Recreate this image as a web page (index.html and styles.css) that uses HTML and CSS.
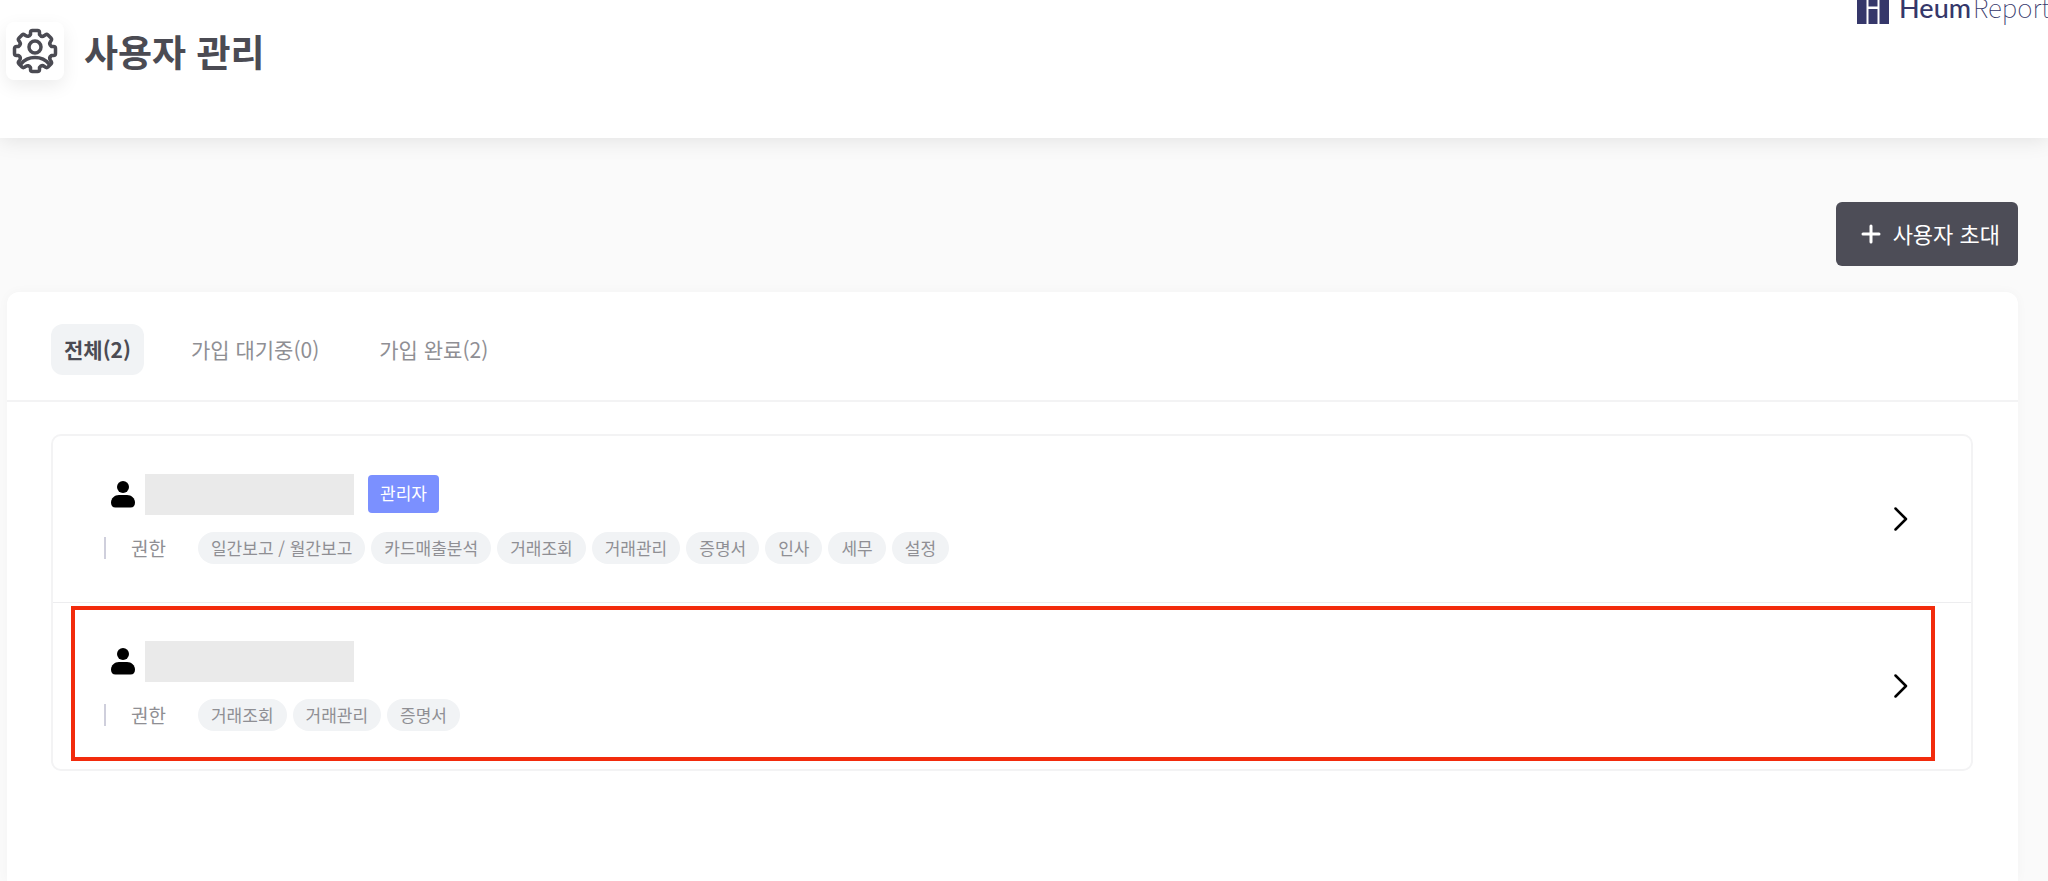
FILE: index.html
```html
<!DOCTYPE html>
<html lang="ko">
<head>
    <meta charset="UTF-8">
    <meta name="viewport" content="width=device-width, initial-scale=1.0">
    <title>사용자 관리 - Heum Report</title>
    <link rel="stylesheet" href="styles.css">
</head>
<body>
    <header class="header">
        <div class="page-title">
            <span class="title-icon">
                <svg width="46" height="46" viewBox="0 0 46 46" fill="none" stroke="currentColor" stroke-width="3.500" stroke-linejoin="round" stroke-linecap="round">
                    <path d="M18.500 6.500V4.500A2 2 0 0 1 20.500 2.500H25.500A2 2 0 0 1 27.500 4.500V6.500Q29.500 9.500 32.500 7.500Q34.500 5.500 36 7L39 10Q40.500 11.500 38.500 13.500Q36.500 16.500 39.500 18.500H41.500A2 2 0 0 1 43.500 20.500V25.500A2 2 0 0 1 41.500 27.500H39.500Q36.500 29.500 38.500 32.500Q40.500 34.500 39 36L36 39Q34.500 40.500 32.500 38.500Q29.500 36.500 27.500 39.500V41.500A2 2 0 0 1 25.500 43.500H20.500A2 2 0 0 1 18.500 41.500V39.500Q16.500 36.500 13.500 38.500Q11.500 40.500 10 39L7 36Q5.500 34.500 7.500 32.500Q9.500 29.500 6.500 27.500H4.500A2 2 0 0 1 2.500 25.500V20.500A2 2 0 0 1 4.500 18.500H6.500Q9.500 16.500 7.500 13.500Q5.500 11.500 7 10L10 7Q11.500 5.500 13.500 7.500Q16.500 9.500 18.500 6.500Z"/>
                    <circle cx="23" cy="19" r="6"/>
                    <path d="M9 36Q14 29.500 23 29.500T37 36"/>
                </svg>
            </span>
            <h1>사용자 관리</h1>
        </div>
        <a class="logo" href="#" aria-label="Heum Report">
            <svg width="32" height="33" viewBox="0 0 32 33" fill="currentColor">
                <path d="M0 0h9.500v33H0zM11.500 0h9v15.500h-9zM11.500 18h9v15h-9zM22.500 0h9.500v33h-9.500z"/>
            </svg>
            <span class="logo-text"><span class="logo-name">Heum</span><span class="logo-sub">Report</span></span>
        </a>
    </header>

    <main class="main">
        <div class="actions">
            <button type="button" class="invite-btn">
                <svg width="20" height="20" viewBox="0 0 20 20" fill="none" stroke="currentColor" stroke-width="3" stroke-linecap="round">
                    <path d="M10 2v16M2 10h16"/>
                </svg>
                <span>사용자 초대</span>
            </button>
        </div>

        <section class="panel">
            <nav class="tabs">
                <button type="button" class="tab active">전체(2)</button>
                <button type="button" class="tab">가입 대기중(0)</button>
                <button type="button" class="tab">가입 완료(2)</button>
            </nav>

            <ul class="user-list">
                <li class="user">
                    <div class="user-info">
                        <div class="user-head">
                            <svg class="user-icon" width="24" height="27" viewBox="0 0 24 27" fill="currentColor">
                                <circle cx="12" cy="6" r="6"/>
                                <path d="M8 14h8c4.500 0 8 3.500 8 7.500 0 3-1.500 5-4.500 5h-15C1.500 26.500 0 24.500 0 21.500 0 17.500 3.500 14 8 14z"/>
                            </svg>
                            <span class="user-name"></span>
                            <span class="badge">관리자</span>
                        </div>
                        <div class="perms">
                            <span class="perms-label">권한</span>
                            <span class="tag">일간보고 / 월간보고</span>
                            <span class="tag">카드매출분석</span>
                            <span class="tag">거래조회</span>
                            <span class="tag">거래관리</span>
                            <span class="tag">증명서</span>
                            <span class="tag">인사</span>
                            <span class="tag">세무</span>
                            <span class="tag">설정</span>
                        </div>
                    </div>
                    <a class="user-link" href="#" aria-label="상세 보기">
                        <svg width="14" height="24" viewBox="0 0 14 24" fill="none" stroke="currentColor" stroke-width="2.500" stroke-linecap="round" stroke-linejoin="round">
                            <path d="M1.500 1.500 12 12 1.500 22.500"/>
                        </svg>
                    </a>
                </li>
                <li class="user selected">
                    <div class="user-info">
                        <div class="user-head">
                            <svg class="user-icon" width="24" height="27" viewBox="0 0 24 27" fill="currentColor">
                                <circle cx="12" cy="6" r="6"/>
                                <path d="M8 14h8c4.500 0 8 3.500 8 7.500 0 3-1.500 5-4.500 5h-15C1.500 26.500 0 24.500 0 21.500 0 17.500 3.500 14 8 14z"/>
                            </svg>
                            <span class="user-name"></span>
                        </div>
                        <div class="perms">
                            <span class="perms-label">권한</span>
                            <span class="tag">거래조회</span>
                            <span class="tag">거래관리</span>
                            <span class="tag">증명서</span>
                        </div>
                    </div>
                    <a class="user-link" href="#" aria-label="상세 보기">
                        <svg width="14" height="24" viewBox="0 0 14 24" fill="none" stroke="currentColor" stroke-width="2.500" stroke-linecap="round" stroke-linejoin="round">
                            <path d="M1.500 1.500 12 12 1.500 22.500"/>
                        </svg>
                    </a>
                </li>
            </ul>
        </section>
    </main>
</body>
</html>
```
FILE: styles.css
```css
:root {
    --dark: #4b4b53;
    --gray: #8f8f94;
    --navy: #35376a;
    --line: #f3f3f4;
    --chip: #f1f3f5;
    --primary: #7b90ff;
    --mark: #f22b0c;
}

* {
    box-sizing: border-box;
}

body {
    margin: 0;
    min-height: 100vh;
    display: flex;
    flex-direction: column;
    overflow: hidden;
    background-color: #fafafa;
    color: var(--dark);
    font-family: "Noto Sans CJK KR", "Noto Sans", sans-serif;
    font-size: 17px;
}

button {
    border: none;
    font-family: inherit;
    cursor: pointer;
}

a {
    color: inherit;
    text-decoration: none;
}

svg {
    display: block;
    flex-shrink: 0;
}

.header {
    display: flex;
    justify-content: space-between;
    align-items: flex-start;
    height: 138px;
    padding-left: 6px;
    background-color: #fff;
    box-shadow: 0 2px 20px rgba(0, 0, 0, 0.1);
}

.page-title {
    display: flex;
    align-items: center;
    gap: 20px;
    padding-top: 22px;
}

.title-icon {
    display: flex;
    align-items: center;
    justify-content: center;
    width: 58px;
    height: 58px;
    border-radius: 8px;
    background-color: #fff;
    box-shadow: 0 6px 18px rgba(0, 0, 0, 0.08);
}

h1 {
    margin: 0;
    font-size: 37px;
    font-weight: 700;
    line-height: 58px;
}

/* the logo runs off the top right corner */
.logo {
    display: flex;
    align-items: flex-end;
    gap: 10px;
    height: 33px;
    margin: -9px -2px 0 0;
    color: var(--navy);
}

.logo-text {
    display: flex;
    align-items: baseline;
    gap: 2px;
    line-height: 32px;
    white-space: nowrap;
}

.logo-name {
    font-family: Lato, sans-serif;
    font-size: 27px;
    font-weight: 500;
}

.logo-sub {
    font-size: 26px;
    font-weight: 100;
}

.main {
    flex: 1;
    display: flex;
    flex-direction: column;
    padding: 64px 30px 0 7px;
}

.actions {
    display: flex;
    justify-content: flex-end;
    margin-bottom: 26px;
}

.invite-btn {
    display: flex;
    align-items: center;
    gap: 12px;
    height: 64px;
    padding: 0 18px 0 25px;
    border-radius: 6px;
    background-color: #4d4d57;
    color: #fff;
    font-size: 22px;
}

.invite-btn span {
    padding-bottom: 2px;
}

.panel {
    flex: 1;
    border-radius: 12px 12px 0 0;
    background-color: #fff;
    box-shadow: 0 0 12px rgba(0, 0, 0, 0.03);
}

.tabs {
    display: flex;
    gap: 34px;
    padding: 32px 44px 25px;
    border-bottom: 2px solid var(--line);
}

.tab {
    height: 51px;
    padding: 0 13px 2px;
    border-radius: 12px;
    background-color: transparent;
    color: var(--gray);
    font-size: 21px;
}

.tab.active {
    background-color: var(--chip);
    color: var(--dark);
    font-weight: 700;
}

.user-list {
    margin: 32px 45px 0 44px;
    padding: 0;
    border: 2px solid var(--line);
    border-radius: 10px;
    list-style: none;
}

.user {
    position: relative;
    display: flex;
    justify-content: space-between;
    align-items: center;
    padding: 38px 63px 38px 51px;
}

.user + .user {
    border-top: 1px solid #ededef;
}

.user.selected::after {
    content: "";
    position: absolute;
    inset: 3px 36px 8px 18px;
    border: 4px solid var(--mark);
    pointer-events: none;
}

.user-head {
    display: flex;
    align-items: center;
    margin-bottom: 17px;
    padding-left: 7px;
}

.user-icon {
    color: #000;
}

.user-name {
    width: 209px;
    height: 41px;
    margin-left: 10px;
    background-color: #eaeaea;
}

.badge {
    margin: 0 0 2px 14px;
    padding: 0 12px 2px;
    border-radius: 4px;
    background-color: var(--primary);
    color: #fff;
    line-height: 36px;
}

.perms {
    display: flex;
    align-items: center;
    gap: 6px;
}

.perms::before {
    content: "";
    width: 2px;
    height: 22px;
    background-color: #cfcfdc;
}

.perms-label {
    margin: 0 26px 0 19px;
    color: var(--gray);
    font-size: 19px;
    line-height: 32px;
}

.tag {
    padding: 0 13px;
    border-radius: 16px;
    background-color: var(--chip);
    color: var(--gray);
    line-height: 32px;
}

.user-link {
    color: #000;
}
```
